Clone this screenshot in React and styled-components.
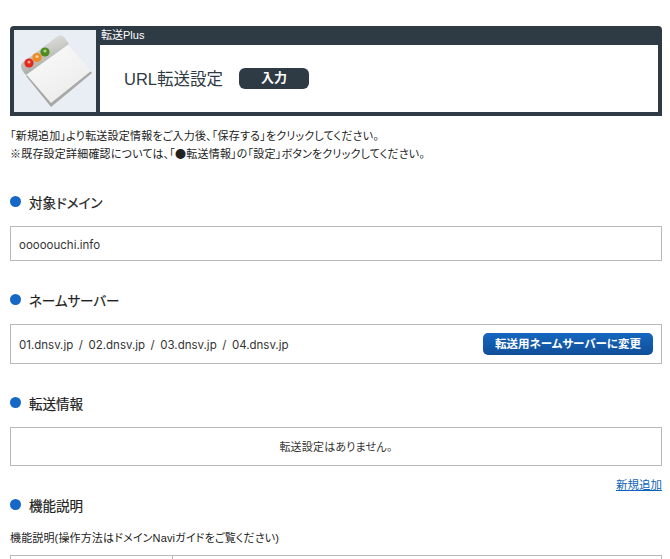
import styled, { createGlobalStyle } from "styled-components";

const GlobalStyle = createGlobalStyle`
  html, body {
    margin: 0;
    padding: 0;
    height: 559px;
    overflow: hidden;
    background: #ffffff;
  }
  body {
    font-family: "Liberation Sans", "Noto Sans CJK JP", sans-serif;
    color: #222222;
    font-feature-settings: "palt";
  }
`;

const Page = styled.div`
  width: 652px;
  height: 559px;
  overflow: hidden;
  padding: 26px 8px 0 10px;
`;

const Banner = styled.div`
  display: flex;
  height: 90px;
  box-sizing: border-box;
  padding: 4px;
  gap: 4px;
  background: #2f3b44;
  border-radius: 4px 4px 0 0;
`;

const Thumb = styled.div`
  width: 82px;
  height: 82px;
  flex: none;
  background: #e9edf4;
`;

const BannerBody = styled.div`
  flex: 1;
  display: flex;
  flex-direction: column;
`;

const BannerLabel = styled.div`
  height: 15px;
  padding-left: 1px;
  font-size: 11px;
  line-height: 11px;
  color: #ffffff;
`;

const BannerPanel = styled.div`
  flex: 1;
  display: flex;
  align-items: center;
  gap: 16px;
  padding-left: 24px;
  background: #ffffff;
`;

const PageTitle = styled.h1`
  margin: 0;
  font-size: 16.5px;
  line-height: 22px;
  font-weight: 400;
  color: #2f3b44;
`;

const StepBadge = styled.span`
  width: 70px;
  height: 21px;
  border-radius: 6px;
  background: #2f3b44;
  color: #ffffff;
  font-size: 13px;
  line-height: 20px;
  font-weight: 700;
  text-align: center;
`;

const Intro = styled.p`
  margin: 11px 0 0;
  height: 36px;
  font-size: 11px;
  line-height: 18px;
  letter-spacing: 0.2px;
  color: #222222;
`;

const BigDot = styled.span`
  font-family: "Noto Sans CJK JP", sans-serif;
  font-feature-settings: normal;
  line-height: 1;
`;

const SectionTitle = styled.h2`
  display: flex;
  align-items: center;
  gap: 8px;
  margin: ${(p) => p.$top}px 0 0;
  height: 20px;
  font-size: 13.5px;
  font-weight: 400;
  color: #222222;
  -webkit-text-stroke: 0.2px #222222;

  &::before {
    content: "";
    width: 11px;
    height: 11px;
    border-radius: 50%;
    background: #1568c6;
    transform: translateY(-1px);
  }
`;

const InfoBox = styled.div`
  display: flex;
  align-items: center;
  justify-content: space-between;
  box-sizing: border-box;
  height: ${(p) => p.$height}px;
  margin-top: 14px;
  padding: 2px 8px 0;
  border: 1px solid #b9b9b9;
  font-family: Inter, "Noto Sans CJK JP", sans-serif;
  font-size: 11.5px;
  word-spacing: 2.3px;
  color: #333333;
`;

const NoticeBox = styled(InfoBox)`
  justify-content: center;
  padding: 0 8px 2px;
  font-family: "Liberation Sans", "Noto Sans CJK JP", sans-serif;
  font-size: 11px;
  letter-spacing: 0.2px;
`;

const ChangeButton = styled.button`
  width: 170px;
  height: 22px;
  margin-bottom: 2px;
  padding: 0;
  border: none;
  border-radius: 5px;
  background: linear-gradient(#1566c0, #104f98);
  color: #ffffff;
  font-family: "Liberation Sans", "Noto Sans CJK JP", sans-serif;
  font-feature-settings: inherit;
  font-size: 11.5px;
  font-weight: 700;
  line-height: 22px;
`;

const LinkRow = styled.div`
  display: flex;
  justify-content: flex-end;
  height: 15px;
  margin-top: 12px;
`;

const TextLink = styled.a`
  font-size: 11.5px;
  line-height: 15px;
  color: #0f64b8;
  text-decoration: underline;
`;

const Caption = styled.p`
  margin: 15px 0 0;
  font-size: 11px;
  line-height: 16px;
  letter-spacing: 0.15px;
  color: #222222;
`;

const GuideTable = styled.div`
  display: grid;
  grid-template-columns: 162px 1fr;
  height: 40px;
  margin-top: 9px;
  border: 1px solid #b9b9b9;
`;

const GuideCell = styled.div`
  border-right: ${(p) => (p.$first ? "1px solid #b9b9b9" : "none")};
`;

function WindowIcon() {
  return (
    <svg width="82" height="82" viewBox="0 0 82 82">
      <defs>
        <linearGradient id="bar" x1="0.2" y1="0" x2="0.55" y2="1">
          <stop offset="0" stopColor="#e8e8e6" />
          <stop offset="1" stopColor="#a3a49f" />
        </linearGradient>
        <linearGradient id="sheet" x1="0" y1="0" x2="0.6" y2="1">
          <stop offset="0" stopColor="#fbfbfb" />
          <stop offset="1" stopColor="#ececec" />
        </linearGradient>
      </defs>
      <path d="M12 46 L54 17 L78 43 L37 77 Z" fill="#a8a8a6" />
      <path d="M12 44 L54 15 L77 41 L37 73 Z" fill="url(#sheet)" />
      <path
        d="M8 33 L44 6 Q47 4 50 7 L55 14 L12 45 Q7 40 7 36 Q7 34 8 33 Z"
        fill="url(#bar)"
      />
      <circle cx="15" cy="33" r="4.6" fill="#e5281c" />
      <circle cx="23" cy="27.5" r="4.6" fill="#f08a24" />
      <circle cx="31" cy="22" r="4.6" fill="#4f8a1f" />
      <circle cx="15" cy="32" r="1.6" fill="#ff9c90" />
      <circle cx="23" cy="26.5" r="1.6" fill="#ffd09a" />
      <circle cx="31" cy="21" r="1.6" fill="#a9d488" />
    </svg>
  );
}

export default function App() {
  return (
    <Page>
      <GlobalStyle />
      <Banner>
        <Thumb>
          <WindowIcon />
        </Thumb>
        <BannerBody>
          <BannerLabel>転送Plus</BannerLabel>
          <BannerPanel>
            <PageTitle>URL転送設定</PageTitle>
            <StepBadge>入力</StepBadge>
          </BannerPanel>
        </BannerBody>
      </Banner>

      <Intro>
        「新規追加」より転送設定情報をご入力後、「保存する」をクリックしてください。
        <br />
        ※既存設定詳細確認については、「<BigDot>●</BigDot>転送情報」の「設定」ボタンをクリックしてください。
      </Intro>

      <SectionTitle $top={29}>対象ドメイン</SectionTitle>
      <InfoBox $height={35}>ooooouchi.info</InfoBox>

      <SectionTitle $top={29}>ネームサーバー</SectionTitle>
      <InfoBox $height={40}>
        01.dnsv.jp / 02.dnsv.jp / 03.dnsv.jp / 04.dnsv.jp
        <ChangeButton>転送用ネームサーバーに変更</ChangeButton>
      </InfoBox>

      <SectionTitle $top={29}>転送情報</SectionTitle>
      <NoticeBox $height={39}>転送設定はありません。</NoticeBox>

      <LinkRow>
        <TextLink href="#">新規追加</TextLink>
      </LinkRow>

      <SectionTitle $top={2}>機能説明</SectionTitle>
      <Caption>機能説明(操作方法はドメインNaviガイドをご覧ください)</Caption>
      <GuideTable>
        <GuideCell $first />
        <GuideCell />
      </GuideTable>
    </Page>
  );
}
